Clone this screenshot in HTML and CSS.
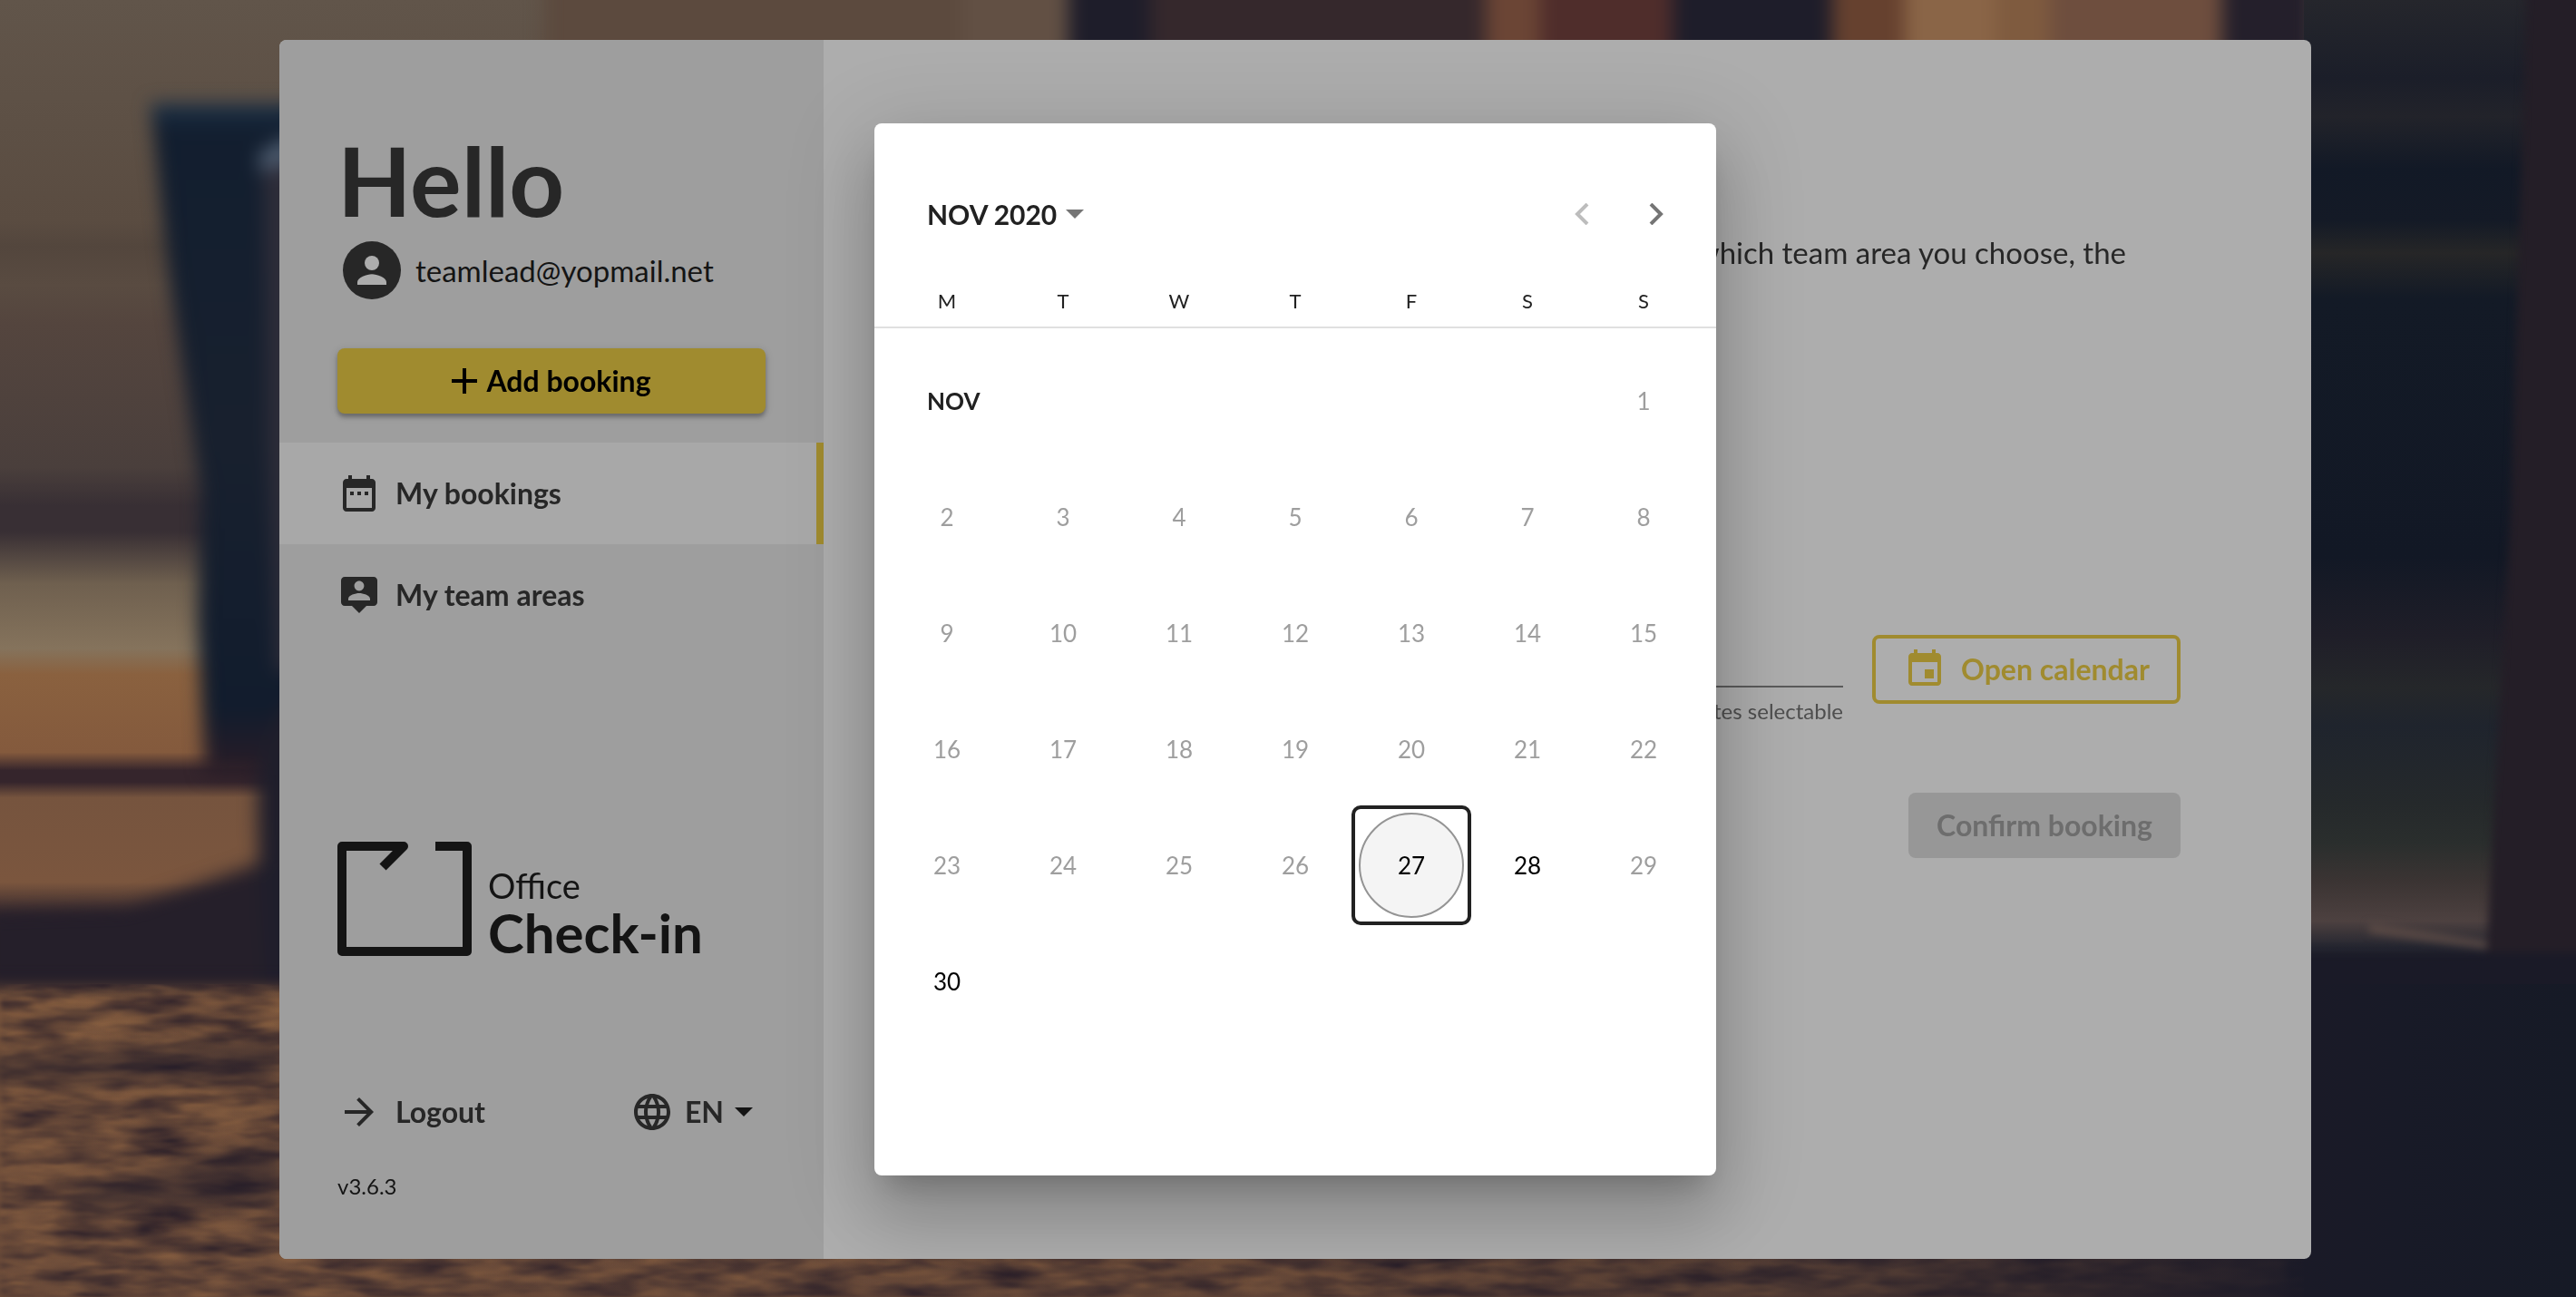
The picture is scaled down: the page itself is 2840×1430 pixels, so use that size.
FILE: index.html
```html
<!DOCTYPE html>
<html lang="en">
<head>
<meta charset="utf-8">
<title>Office Check-in</title>
<link rel="stylesheet" href="styles.css">
</head>
<body>
<svg class="photo" viewBox="0 0 2840 1430" preserveAspectRatio="xMidYMid slice" aria-hidden="true">
  <defs>
    <linearGradient id="wall" x1="0" y1="0" x2="0" y2="1">
      <stop offset="0" stop-color="#61554a"/><stop offset=".17" stop-color="#5a4c41"/>
      <stop offset=".19" stop-color="#53463d"/><stop offset=".22" stop-color="#594b41"/>
      <stop offset=".25" stop-color="#54453e"/><stop offset=".36" stop-color="#4a3f3c"/>
      <stop offset=".39" stop-color="#382f34"/><stop offset=".41" stop-color="#382f34"/>
      <stop offset=".45" stop-color="#6f604f"/><stop offset=".5" stop-color="#85735c"/>
      <stop offset=".52" stop-color="#8a613f"/><stop offset=".58" stop-color="#845a3d"/>
      <stop offset=".594" stop-color="#35252c"/><stop offset=".603" stop-color="#35252c"/>
      <stop offset=".615" stop-color="#76543e"/><stop offset=".68" stop-color="#7b563e"/>
      <stop offset=".71" stop-color="#2a212b"/><stop offset=".75" stop-color="#241e2a"/>
      <stop offset=".77" stop-color="#7c573d"/><stop offset="1" stop-color="#6c4c3a"/>
    </linearGradient>
    <linearGradient id="room" x1="0" y1="0" x2="0" y2="1">
      <stop offset="0" stop-color="#25262c"/><stop offset=".06" stop-color="#1b1e29"/>
      <stop offset=".09" stop-color="#22232a"/><stop offset=".13" stop-color="#121926"/>
      <stop offset=".17" stop-color="#141a26"/><stop offset=".195" stop-color="#262627"/>
      <stop offset=".23" stop-color="#131a26"/><stop offset=".43" stop-color="#121825"/>
      <stop offset=".49" stop-color="#1f1e28"/><stop offset=".53" stop-color="#25272a"/>
      <stop offset=".56" stop-color="#1f242d"/><stop offset=".62" stop-color="#25292b"/>
      <stop offset=".65" stop-color="#2a2e2d"/><stop offset=".68" stop-color="#3b3433"/>
      <stop offset=".71" stop-color="#4d4140"/><stop offset=".73" stop-color="#252630"/>
      <stop offset=".77" stop-color="#1e1b27"/><stop offset=".84" stop-color="#1c1a26"/>
      <stop offset=".86" stop-color="#2b2029"/><stop offset="1" stop-color="#1c1a27"/>
    </linearGradient>
    <linearGradient id="leg" x1="0" y1="0" x2="0" y2="1">
      <stop offset="0" stop-color="#1d3248"/><stop offset=".04" stop-color="#121e2f"/>
      <stop offset=".5" stop-color="#18202e"/><stop offset=".9" stop-color="#111c2d"/>
      <stop offset="1" stop-color="#2a1c26"/>
    </linearGradient>
    <filter id="soft" x="-20%" y="-20%" width="140%" height="140%" color-interpolation-filters="sRGB"><feGaussianBlur stdDeviation="10"/></filter>
    <filter id="softer" x="-20%" y="-20%" width="140%" height="140%" color-interpolation-filters="sRGB"><feGaussianBlur stdDeviation="5"/></filter>
    <filter id="dark-fibre" x="0" y="0" width="100%" height="100%" color-interpolation-filters="sRGB">
      <feTurbulence type="fractalNoise" baseFrequency=".014 .06" numOctaves="4" seed="4"/>
      <feColorMatrix values="0 0 0 0 .17  0 0 0 0 .125  0 0 0 0 .16  1.8 0 0 0 -.62"/>
      <feGaussianBlur stdDeviation="3 1"/>
    </filter>
    <filter id="light-fibre" x="0" y="0" width="100%" height="100%" color-interpolation-filters="sRGB">
      <feTurbulence type="fractalNoise" baseFrequency=".03 .12" numOctaves="3" seed="12"/>
      <feColorMatrix values="0 0 0 0 .6  0 0 0 0 .42  0 0 0 0 .27  2.4 0 0 0 -1"/>
      <feGaussianBlur stdDeviation="3 1"/>
    </filter>
    <linearGradient id="shade" x1="0" y1="0" x2="1" y2="0">
      <stop offset="0" stop-color="#1c1a27" stop-opacity="0"/><stop offset=".5" stop-color="#1c1a27" stop-opacity=".1"/>
      <stop offset=".72" stop-color="#1c1a27" stop-opacity=".4"/><stop offset=".86" stop-color="#1c1a27" stop-opacity=".85"/><stop offset=".93" stop-color="#181a27" stop-opacity=".97"/><stop offset="1" stop-color="#161a26"/>
    </linearGradient>
  </defs>
  <rect width="2840" height="1430" fill="url(#wall)"/>
  <g filter="url(#soft)">
    <path fill="#5c4a3e" d="M600-30h460v110H600z"/>
    <path fill="#625044" d="M1060-30h118v110h-118z"/>
    <path fill="#1e1d2a" d="M1178-30h90v110h-90z"/>
    <path fill="#35282c" d="M1268-30h370v110h-370z"/>
    <path fill="#6b4535" d="M1638-30h60v110h-60z"/>
    <path fill="#4f2d2b" d="M1698-30h146v110h-146z"/>
    <path fill="#1e1d2a" d="M1844-30h176v110h-176z"/>
    <path fill="#66412f" d="M2020-30h80v110h-80z"/>
    <path fill="#8a6547" d="M2100-30h100v110h-100z"/>
    <path fill="#7f5b3f" d="M2200-30h60v110h-60z"/>
    <path fill="#6e4e3e" d="M2260-30h190v110h-190z"/>
    <path fill="#241f2b" d="M2450-30h100v110h-100z"/>
    <path fill="#251f2a" d="M-20 1006l160-4 180-62v144H-20z"/>
    <path fill="url(#leg)" d="M166 114h164v740H226l-8-170 4-140-34-230z"/>
    <path fill="#2e2d39" d="M290 180h40v560h-26l-8-250z"/>
    <path fill="#4c5a6d" d="M286 168l40-22v32l-40 12z"/>
    <path fill="#1f1e2b" d="M330 760q-46 40-46 120t10 204h36z"/>
  </g>
  <rect x="2540" width="300" height="1430" fill="url(#room)"/>
  <g filter="url(#softer)">
    <path fill="#241e27" d="M2786-20h80v1100h-126l8-160 20-360z"/>
    <path fill="#5c4b46" d="M2612 1018l130 20v8l-130-18z"/>
    <path fill="#1a1a27" d="M2520 1050h340v400h-340z"/>
  </g>
  <rect y="1085" width="2540" height="345" filter="url(#light-fibre)" opacity=".5"/>
  <rect y="1085" width="2540" height="345" filter="url(#dark-fibre)"/>
  <path fill="#231d29" opacity=".5" filter="url(#soft)" d="M-20 1165l330-20v45l-330 5zM80 1310l230-50v70l-230 10z"/>
  <rect y="1085" width="2840" height="345" fill="url(#shade)"/>
</svg>

<main class="card">
  <aside class="sidebar">
    <header class="profile">
      <h1 class="hello">Hello</h1>
      <div class="user">
        <svg class="avatar" viewBox="2 2 20 20"><circle cx="12" cy="12" r="10" fill="#272727"/><circle cx="12" cy="9.500" r="2.500" fill="#adadad"/><path fill="#adadad" d="M7 17v-.9c0-1.700 3.300-2.800 5-2.800s5 1.100 5 2.800v.9z"/></svg>
        <span>teamlead@yopmail.net</span>
      </div>
      <button class="btn btn-add" type="button">
        <svg viewBox="5 5 14 14" width="28" height="28"><path d="M19 13h-6v6h-2v-6H5v-2h6V5h2v6h6z"/></svg>
        Add booking
      </button>
    </header>
    <nav class="nav">
      <a class="nav-item active" href="#bookings">
        <svg class="icon" viewBox="0 0 24 24"><path d="M9 11H7v2h2zm4 0h-2v2h2zm4 0h-2v2h2zm2-7h-1V2h-2v2H8V2H6v2H5c-1.110 0-1.990.9-1.990 2L3 20c0 1.100.89 2 2 2h14c1.100 0 2-.9 2-2V6c0-1.100-.9-2-2-2zm0 16H5V9h14z"/></svg>
        My bookings
      </a>
      <a class="nav-item" href="#areas">
        <svg class="icon" viewBox="0 0 24 24"><path d="M20 2H4c-1.110 0-2 .9-2 2v12c0 1.100.89 2 2 2h4l4 4 4-4h4c1.100 0 2-.9 2-2V4c0-1.100-.9-2-2-2zm-8 2.300c1.490 0 2.700 1.210 2.700 2.700S13.490 9.700 12 9.700 9.300 8.490 9.300 7s1.210-2.700 2.700-2.700zM18 15H6v-.9c0-2 4-3.100 6-3.100s6 1.100 6 3.100z"/></svg>
        My team areas
      </a>
    </nav>
    <div class="brand">
      <svg class="brand-mark" viewBox="0 0 148 126"><path d="M108 5h35v116H5V5h68L50 28" fill="none" stroke="#141414" stroke-width="10" stroke-linejoin="round"/></svg>
      <div class="brand-name"><span>Office</span><strong>Check-in</strong></div>
    </div>
    <div class="session">
      <a class="logout" href="#logout">
        <svg class="icon" viewBox="0 0 24 24"><path d="M12 4l-1.410 1.410L16.170 11H4v2h12.170l-5.580 5.590L12 20l8-8z"/></svg>
        Logout
      </a>
      <button class="lang" type="button">
        <svg class="icon" viewBox="0 0 24 24"><path d="M11.990 2C6.470 2 2 6.480 2 12s4.470 10 9.990 10C17.520 22 22 17.520 22 12S17.520 2 11.990 2zm6.930 6h-2.950c-.32-1.250-.78-2.450-1.380-3.560 1.840.63 3.370 1.910 4.330 3.560zM12 4.040c.83 1.200 1.480 2.530 1.910 3.960h-3.820c.43-1.430 1.080-2.760 1.910-3.960zM4.260 14C4.100 13.360 4 12.690 4 12s.1-1.360.26-2h3.380c-.08.66-.14 1.320-.14 2s.06 1.340.14 2zm.82 2h2.950c.32 1.250.78 2.450 1.380 3.560-1.840-.63-3.370-1.900-4.330-3.560zm2.950-8H5.080c.96-1.660 2.490-2.930 4.330-3.560C8.810 5.550 8.350 6.750 8.030 8zM12 19.960c-.83-1.200-1.480-2.530-1.910-3.960h3.820c-.43 1.430-1.080 2.760-1.910 3.960zM14.340 14H9.660c-.09-.66-.16-1.320-.16-2s.07-1.350.16-2h4.680c.09.65.16 1.320.16 2s-.07 1.340-.16 2zm.25 5.560c.6-1.110 1.060-2.310 1.380-3.560h2.950c-.96 1.650-2.490 2.930-4.330 3.560zM16.360 14c.08-.66.14-1.320.14-2s-.06-1.340-.14-2h3.380c.16.64.26 1.310.26 2s-.1 1.360-.26 2z"/></svg>
        EN
        <svg class="caret" viewBox="0 0 20 10"><path d="M0 0h20L10 10z"/></svg>
      </button>
    </div>
    <p class="version">v3.6.3</p>
  </aside>

  <section class="booking">
    <p class="intro">which team area you choose, the</p>
    <div class="date-row">
      <div class="date-field"><span class="hint">dates selectable</span></div>
      <button class="btn btn-open" type="button">
        <svg class="icon" viewBox="0 0 24 24"><path d="M17 12h-5v5h5zM16 1v2H8V1H6v2H5c-1.110 0-1.990.9-1.990 2L3 19c0 1.100.89 2 2 2h14c1.100 0 2-.9 2-2V5c0-1.100-.9-2-2-2h-1V1zm3 18H5V8h14z"/></svg>
        Open calendar
      </button>
    </div>
    <button class="btn btn-confirm" type="button" disabled>Confirm booking</button>
  </section>
</main>

<div class="overlay">
  <div class="dialog" role="dialog" aria-label="Calendar">
    <div class="cal-head">
      <button class="period" type="button">NOV 2020 <svg class="caret" viewBox="0 0 20 10"><path d="M0 0h20L10 10z"/></svg></button>
      <div class="steps">
        <button class="step" type="button" disabled aria-label="Previous month"><svg viewBox="0 0 16 24"><path d="M14 1L3 12l11 11"/></svg></button>
        <button class="step" type="button" aria-label="Next month"><svg viewBox="0 0 16 24"><path d="M2 1l11 11L2 23"/></svg></button>
      </div>
    </div>
    <table class="cal">
      <thead>
        <tr><th>M</th><th>T</th><th>W</th><th>T</th><th>F</th><th>S</th><th>S</th></tr>
      </thead>
      <tbody>
        <tr><td class="gap" colspan="7"></td></tr>
        <tr><td class="month" colspan="6">NOV</td><td>1</td></tr>
        <tr><td>2</td><td>3</td><td>4</td><td>5</td><td>6</td><td>7</td><td>8</td></tr>
        <tr><td>9</td><td>10</td><td>11</td><td>12</td><td>13</td><td>14</td><td>15</td></tr>
        <tr><td>16</td><td>17</td><td>18</td><td>19</td><td>20</td><td>21</td><td>22</td></tr>
        <tr><td>23</td><td>24</td><td>25</td><td>26</td><td class="open today"><button type="button">27</button></td><td class="open">28</td><td>29</td></tr>
        <tr><td class="open">30</td><td></td><td></td><td></td><td></td><td></td><td></td></tr>
      </tbody>
    </table>
  </div>
</div>
</body>
</html>
```
FILE: styles.css
```css
* { box-sizing: border-box; }

body {
  margin: 0;
  min-height: 100vh;
  padding: 44px 16px 42px 32px;
  display: flex;
  justify-content: center;
  font-family: Lato, "Noto Sans", sans-serif;
  font-size: 33px;
  line-height: 40px;
  color: #272727;
  background: #241e2a;
}

h1, p { margin: 0; }
a { color: inherit; text-decoration: none; }
button { font: inherit; color: inherit; border: 0; padding: 0; background: none; }
svg { display: block; flex: none; fill: currentColor; }

.photo {
  position: fixed;
  inset: 0;
  z-index: -1;
  width: 100%;
  height: 100%;
}

.icon { width: 48px; height: 48px; }
.caret { width: 20px; height: 10px; }

/* Page card */
.card {
  display: flex;
  width: 100%;
  max-width: 2240px;
  border-radius: 8px;
  overflow: hidden;
  background: #adadad;
}

.sidebar {
  display: flex;
  flex-direction: column;
  flex: 0 0 600px;
  background: #9e9e9e;
}

.profile { padding: 92px 64px 32px; }
.hello { margin-bottom: 6px; font-size: 106px; line-height: 124px; }
.user { display: flex; align-items: center; gap: 16px; padding-left: 6px; color: #141414; }
.avatar { width: 64px; height: 64px; }

.btn {
  display: flex;
  align-items: center;
  justify-content: center;
  height: 72px;
  border-radius: 8px;
  font-size: 32px;
  font-weight: 700;
}

.btn-add {
  width: 100%;
  margin-top: 54px;
  gap: 10px;
  color: #000;
  background: #a08b2f;
  box-shadow: 0 4px 4px rgba(0, 0, 0, .25), 0 2px 10px rgba(0, 0, 0, .15);
}

.nav-item {
  display: flex;
  align-items: center;
  gap: 16px;
  height: 112px;
  padding-left: 64px;
  font-size: 32px;
  font-weight: 700;
}
.nav-item.active { background: #a8a8a8; border-right: 8px solid #a08b2f; }

.brand {
  display: flex;
  align-items: flex-end;
  gap: 18px;
  margin-top: auto;
  padding: 0 64px;
  color: #141414;
}
.brand-mark { width: 148px; height: 126px; }
.brand-name { display: flex; flex-direction: column; font-size: 38px; line-height: 52px; }
.brand-name strong { font-size: 60px; }

.session {
  display: flex;
  justify-content: space-between;
  padding: 148px 78px 0 64px;
  font-size: 32px;
  font-weight: 700;
}
.logout, .lang { display: flex; align-items: center; gap: 16px; }
.lang { gap: 12px; }
.lang .caret { color: #141414; }
.version { padding: 38px 64px 60px; font-size: 24px; color: #141414; }

.booking {
  flex: 1;
  display: flex;
  flex-direction: column;
  align-items: flex-end;
  padding: 214px 144px 0 56px;
}
.intro { padding-right: 60px; }
.date-row { display: flex; gap: 32px; width: 100%; margin-top: 402px; }
.date-field { flex: 1; height: 58px; border-bottom: 2px solid #5a5a5a; text-align: right; }
.hint { display: block; padding-top: 64px; font-size: 24px; color: #4e4e4e; }
.btn-open { width: 340px; height: 76px; gap: 16px; border: 4px solid #a08b2f; color: #a08b2f; }
.btn-confirm { width: 300px; margin-top: 98px; background: #979797; color: #6d6d6d; }

/* Calendar dialog */
.overlay {
  position: fixed;
  inset: 0;
  display: flex;
  align-items: center;
  justify-content: center;
  padding: 2px 0 0 16px;
}

.dialog {
  width: 928px;
  height: 1160px;
  border-radius: 8px;
  background: #fff;
  color: #212121;
  box-shadow: 0 22px 30px -14px rgba(0, 0, 0, .2), 0 48px 76px 6px rgba(0, 0, 0, .14), 0 18px 92px 16px rgba(0, 0, 0, .12);
}

.cal-head {
  display: flex;
  align-items: center;
  justify-content: space-between;
  padding: 80px 58px 0;
}
.period { display: flex; align-items: center; gap: 10px; font-size: 30px; font-weight: 700; }
.period .caret { color: #757575; }
.steps { display: flex; gap: 66px; }
.step svg { width: 16px; height: 24px; fill: none; stroke: #757575; stroke-width: 4px; }
.step:disabled svg { stroke: #bdbdbd; }

.cal { width: calc(100% - 32px); margin: 0 16px; border-spacing: 0; table-layout: fixed; }
.cal thead { position: relative; }
.cal thead::after {
  content: "";
  position: absolute;
  inset: auto -16px 0;
  height: 2px;
  background: #e0e0e0;
}
.cal th { height: 106px; padding: 0 0 10px; vertical-align: bottom; font-size: 22px; font-weight: 400; }
.cal td { height: 128px; padding: 0; text-align: center; font-size: 26px; color: #9e9e9e; }
.cal .gap { height: 16px; }
.cal .open { color: #000; }
.cal .month { padding-left: 42px; text-align: left; font-weight: 700; color: #212121; }
.cal .today { border-radius: 8px; outline: 4px solid #212121; outline-offset: -2px; }
.today button {
  width: 116px;
  height: 116px;
  border: 2px solid #949494;
  border-radius: 50%;
  background: #f4f4f4;
}
```
